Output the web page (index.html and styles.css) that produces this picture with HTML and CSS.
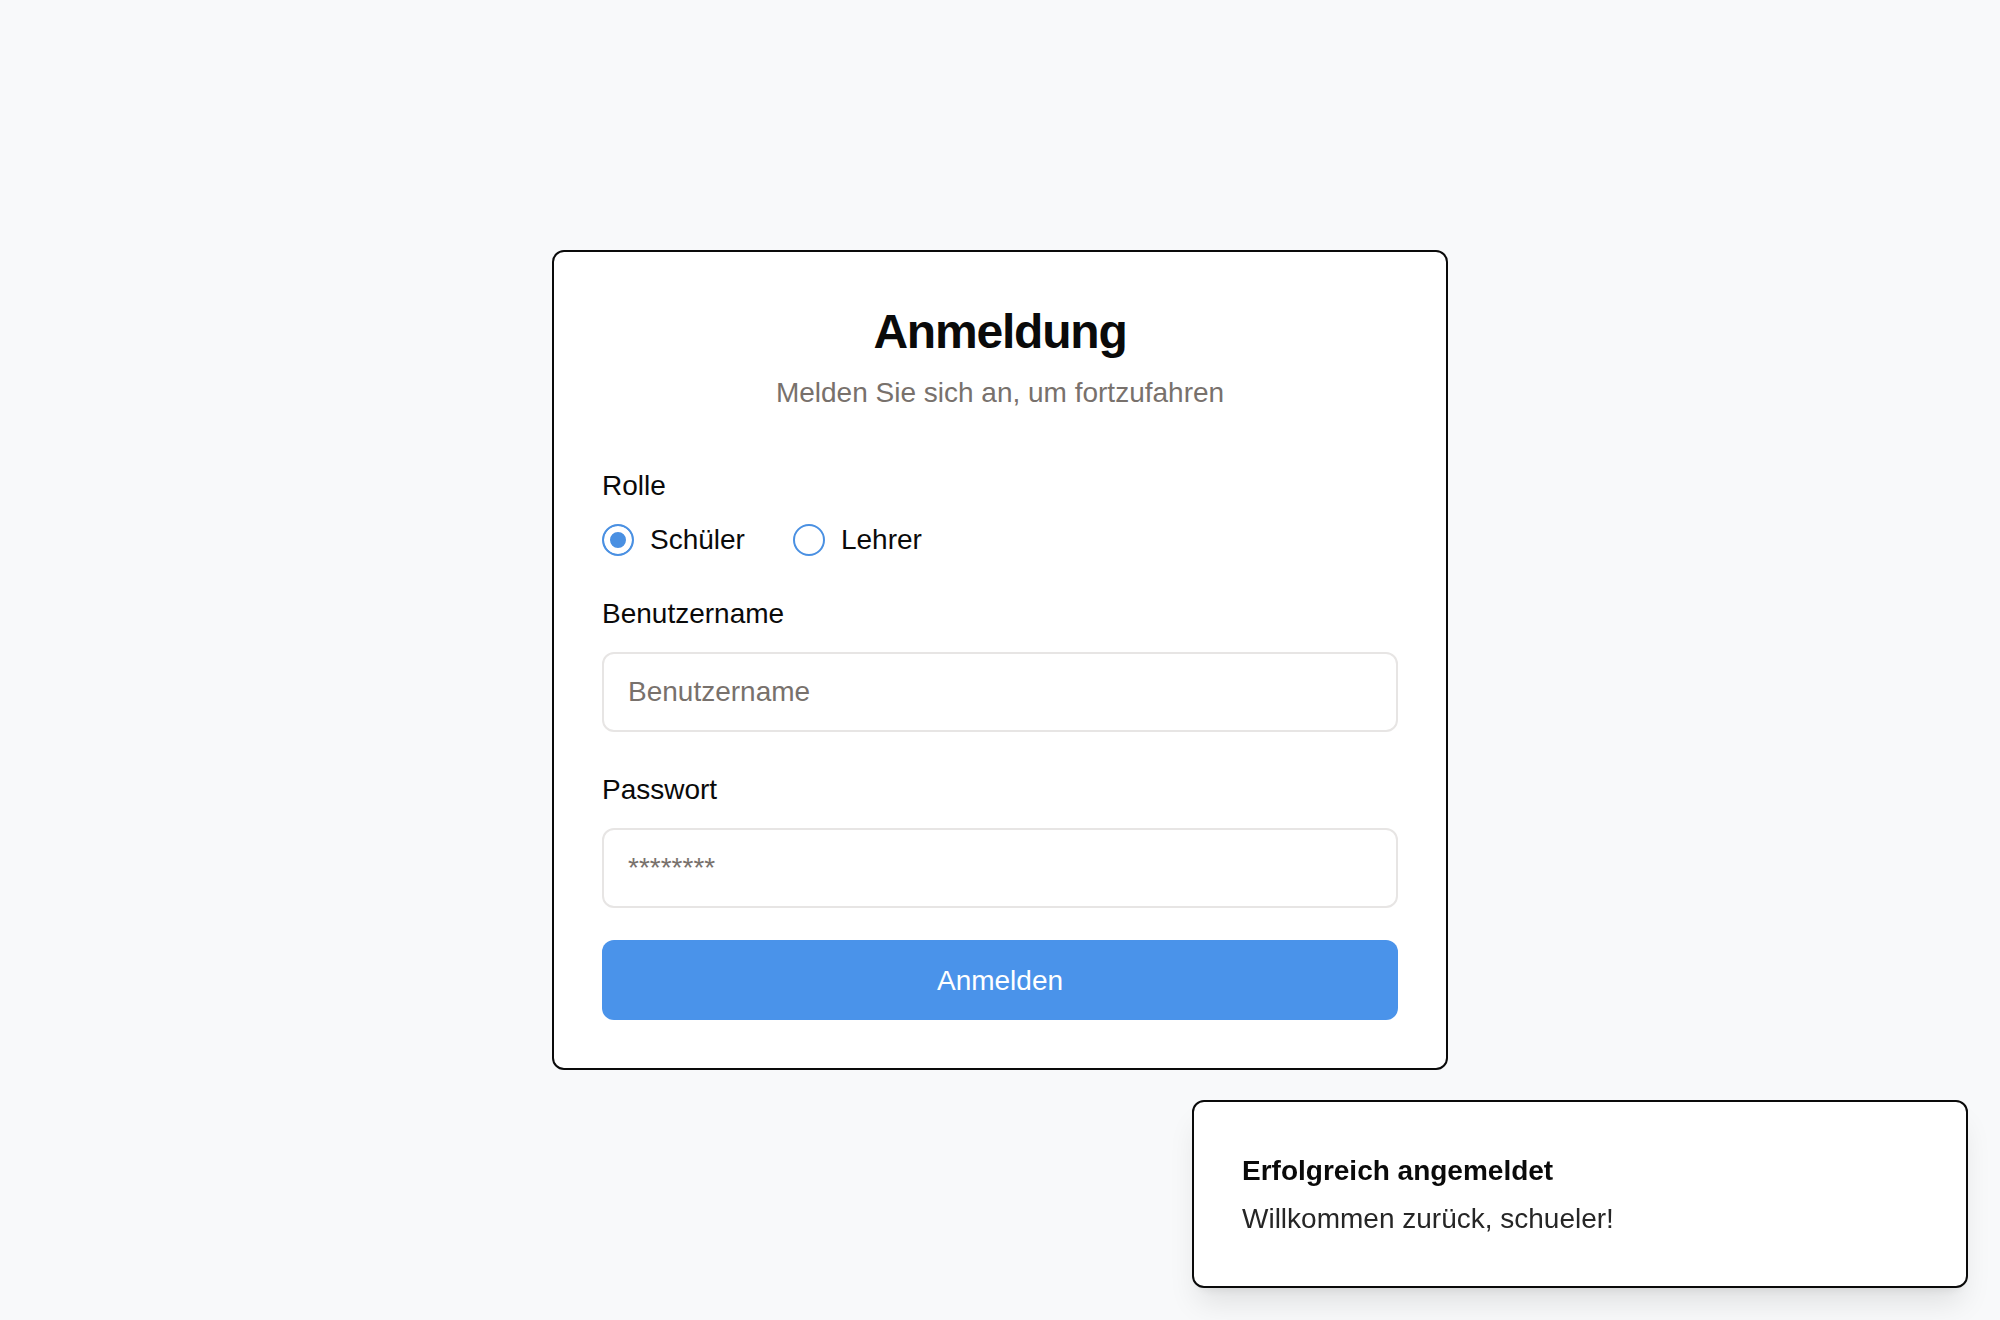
FILE: index.html
```html
<!DOCTYPE html>
<html lang="de">
<head>
<meta charset="utf-8">
<title>Anmeldung</title>
<link rel="stylesheet" href="styles.css">
</head>
<body>
<main class="page">
  <form class="card">
    <h1 class="title">Anmeldung</h1>
    <p class="subtitle">Melden Sie sich an, um fortzufahren</p>

    <div class="label role-label">Rolle</div>
    <div class="radio-row">
      <label class="radio-option">
        <input type="radio" name="role" class="radio" checked>
        <span>Schüler</span>
      </label>
      <label class="radio-option">
        <input type="radio" name="role" class="radio">
        <span>Lehrer</span>
      </label>
    </div>

    <label class="label user-label" for="user">Benutzername</label>
    <input id="user" class="input" type="text" placeholder="Benutzername">

    <label class="label pass-label" for="pass">Passwort</label>
    <input id="pass" class="input" type="password" placeholder="********">

    <button type="button" class="button">Anmelden</button>
  </form>
</main>

<div class="toast">
  <div class="toast-title">Erfolgreich angemeldet</div>
  <div class="toast-text">Willkommen zurück, schueler!</div>
</div>
</body>
</html>
```

FILE: styles.css
```css
* {
  box-sizing: border-box;
}

html, body {
  margin: 0;
  padding: 0;
}

body {
  background: #f8f9fa;
  font-family: "Liberation Sans", Arial, Helvetica, sans-serif;
  color: #0a0a0a;
}

.page {
  min-height: 100vh;
  display: flex;
  align-items: center;
  justify-content: center;
}

.card {
  width: 896px;
  background: #ffffff;
  border: 2px solid #0a0a0a;
  border-radius: 12px;
  padding: 48px;
  display: flex;
  flex-direction: column;
}

.title {
  margin: 0;
  font-size: 48px;
  line-height: 64px;
  font-weight: 700;
  letter-spacing: -1.2px;
  text-align: center;
  color: #0a0a0a;
}

.subtitle {
  margin: 9px 0 0;
  font-size: 28px;
  line-height: 40px;
  text-align: center;
  color: #78716c;
}

.label {
  display: block;
  font-size: 28px;
  line-height: 40px;
  color: #0a0a0a;
}

.role-label {
  margin-top: 53px;
}

.radio-row {
  margin-top: 14px;
  display: flex;
  align-items: center;
  gap: 48px;
  height: 40px;
}

.radio-option {
  display: flex;
  align-items: center;
  gap: 16px;
  font-size: 28px;
  line-height: 40px;
  color: #0a0a0a;
}

.radio {
  appearance: none;
  -webkit-appearance: none;
  margin: 0;
  width: 32px;
  height: 32px;
  border: 2px solid #4a90e2;
  border-radius: 50%;
  background: #ffffff;
  flex: none;
}

.radio:checked {
  background: #4a90e2;
  box-shadow: inset 0 0 0 6px #ffffff;
}

.user-label {
  margin-top: 34px;
}

.pass-label {
  margin-top: 38px;
}

.input {
  margin-top: 18px;
  width: 100%;
  height: 80px;
  border: 2px solid #e7e5e4;
  border-radius: 12px;
  padding: 0 24px;
  font-family: inherit;
  font-size: 28px;
  color: #0a0a0a;
  background: #ffffff;
  outline: none;
}

.input::placeholder {
  color: #78716c;
}

.button {
  margin-top: 32px;
  width: 100%;
  height: 80px;
  border: none;
  border-radius: 12px;
  background: #4a93ea;
  color: #ffffff;
  font-family: inherit;
  font-size: 28px;
  line-height: 40px;
  padding: 2px 0 0;
  cursor: pointer;
}

.toast {
  position: fixed;
  right: 32px;
  bottom: 32px;
  width: 776px;
  background: #ffffff;
  border: 2px solid #0a0a0a;
  border-radius: 12px;
  padding: 49px 48px 47px;
  box-shadow: 0 20px 30px -6px rgba(0, 0, 0, 0.1), 0 8px 12px -8px rgba(0, 0, 0, 0.1);
}

.toast-title {
  font-size: 28px;
  line-height: 40px;
  font-weight: 700;
  color: #0a0a0a;
}

.toast-text {
  margin-top: 8px;
  font-size: 28px;
  line-height: 40px;
  color: #262626;
}
```
